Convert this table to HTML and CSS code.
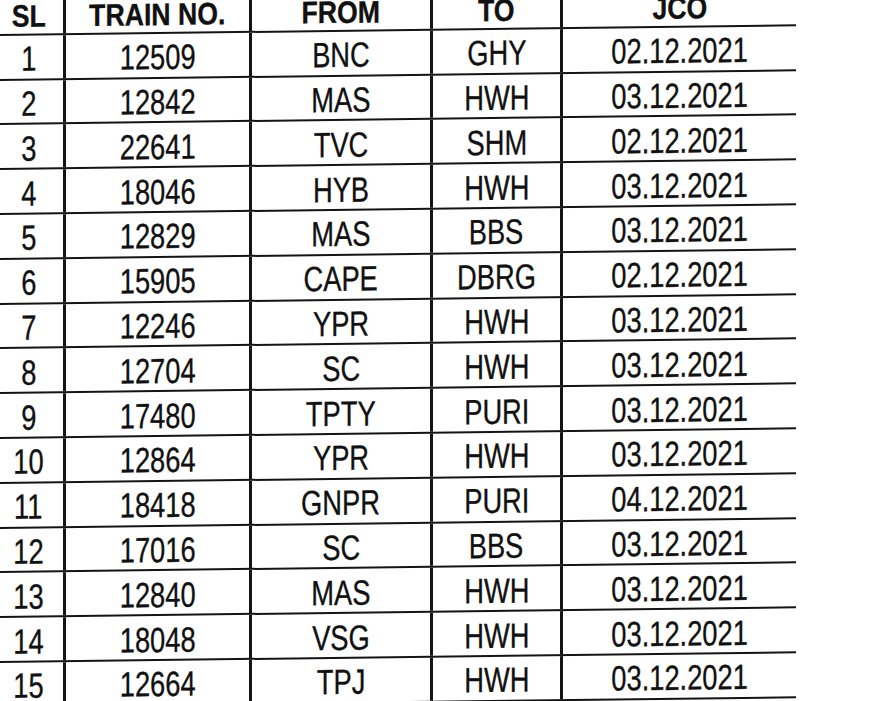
FILE: index.html
```html
<!DOCTYPE html>
<html lang="en">
<head>
<meta charset="utf-8">
<title>Train list</title>
<link rel="stylesheet" href="styles.css">
</head>
<body>
<div class="sheet">
  <div class="row head">
    <div class="c c1"><span>SL</span></div>
    <div class="c c2"><span>TRAIN NO.</span></div>
    <div class="c c3"><span>FROM</span></div>
    <div class="c c4"><span>TO</span></div>
    <div class="c c5"><span>JCO</span></div>
  </div>
  <div class="row"><div class="c c1"><span>1</span></div><div class="c c2"><span>12509</span></div><div class="c c3"><span>BNC</span></div><div class="c c4"><span>GHY</span></div><div class="c c5"><span>02.12.2021</span></div></div>
  <div class="row"><div class="c c1"><span>2</span></div><div class="c c2"><span>12842</span></div><div class="c c3"><span>MAS</span></div><div class="c c4"><span>HWH</span></div><div class="c c5"><span>03.12.2021</span></div></div>
  <div class="row"><div class="c c1"><span>3</span></div><div class="c c2"><span>22641</span></div><div class="c c3"><span>TVC</span></div><div class="c c4"><span>SHM</span></div><div class="c c5"><span>02.12.2021</span></div></div>
  <div class="row"><div class="c c1"><span>4</span></div><div class="c c2"><span>18046</span></div><div class="c c3"><span>HYB</span></div><div class="c c4"><span>HWH</span></div><div class="c c5"><span>03.12.2021</span></div></div>
  <div class="row"><div class="c c1"><span>5</span></div><div class="c c2"><span>12829</span></div><div class="c c3"><span>MAS</span></div><div class="c c4"><span>BBS</span></div><div class="c c5"><span>03.12.2021</span></div></div>
  <div class="row"><div class="c c1"><span>6</span></div><div class="c c2"><span>15905</span></div><div class="c c3"><span>CAPE</span></div><div class="c c4"><span>DBRG</span></div><div class="c c5"><span>02.12.2021</span></div></div>
  <div class="row"><div class="c c1"><span>7</span></div><div class="c c2"><span>12246</span></div><div class="c c3"><span>YPR</span></div><div class="c c4"><span>HWH</span></div><div class="c c5"><span>03.12.2021</span></div></div>
  <div class="row"><div class="c c1"><span>8</span></div><div class="c c2"><span>12704</span></div><div class="c c3"><span>SC</span></div><div class="c c4"><span>HWH</span></div><div class="c c5"><span>03.12.2021</span></div></div>
  <div class="row"><div class="c c1"><span>9</span></div><div class="c c2"><span>17480</span></div><div class="c c3"><span>TPTY</span></div><div class="c c4"><span>PURI</span></div><div class="c c5"><span>03.12.2021</span></div></div>
  <div class="row"><div class="c c1"><span>10</span></div><div class="c c2"><span>12864</span></div><div class="c c3"><span>YPR</span></div><div class="c c4"><span>HWH</span></div><div class="c c5"><span>03.12.2021</span></div></div>
  <div class="row"><div class="c c1"><span>11</span></div><div class="c c2"><span>18418</span></div><div class="c c3"><span>GNPR</span></div><div class="c c4"><span>PURI</span></div><div class="c c5"><span>04.12.2021</span></div></div>
  <div class="row"><div class="c c1"><span>12</span></div><div class="c c2"><span>17016</span></div><div class="c c3"><span>SC</span></div><div class="c c4"><span>BBS</span></div><div class="c c5"><span>03.12.2021</span></div></div>
  <div class="row"><div class="c c1"><span>13</span></div><div class="c c2"><span>12840</span></div><div class="c c3"><span>MAS</span></div><div class="c c4"><span>HWH</span></div><div class="c c5"><span>03.12.2021</span></div></div>
  <div class="row"><div class="c c1"><span>14</span></div><div class="c c2"><span>18048</span></div><div class="c c3"><span>VSG</span></div><div class="c c4"><span>HWH</span></div><div class="c c5"><span>03.12.2021</span></div></div>
  <div class="row"><div class="c c1"><span>15</span></div><div class="c c2"><span>12664</span></div><div class="c c3"><span>TPJ</span></div><div class="c c4"><span>HWH</span></div><div class="c c5"><span>03.12.2021</span></div></div>
</div>
</body>
</html>
```

FILE: styles.css
```css
html, body {
  margin: 0;
  padding: 0;
  background: #ffffff;
  overflow: hidden;
  width: 876px;
  height: 701px;
}

.sheet {
  width: 796px;
  transform: skewY(-0.7deg);
  transform-origin: 0 0;
  font-family: "Liberation Sans", Arial, sans-serif;
  color: #111111;
}

.row {
  display: grid;
  grid-template-columns: 66px 186px 181px 130px 233px;
  height: 44.8px;
  box-sizing: border-box;
  border-bottom: 2.6px solid #141414;
}

.row.head {
  height: 35.75px;
}

.c {
  box-sizing: border-box;
  border-right: 3px solid #141414;
  display: flex;
  justify-content: center;
  align-items: center;
  padding-top: 4px;
  font-size: 35px;
  line-height: 36px;
  white-space: nowrap;
  -webkit-text-stroke: 0.35px #111111;
}

.c5 {
  border-right: none;
}

.c1 {
  padding-right: 6px;
}

.c span {
  display: inline-block;
  transform: scaleX(0.78);
}

.head .c {
  font-size: 31px;
  font-weight: bold;
  line-height: 32px;
  padding-top: 1px;
}

.head .c span {
  transform: scaleX(0.86);
}
```
